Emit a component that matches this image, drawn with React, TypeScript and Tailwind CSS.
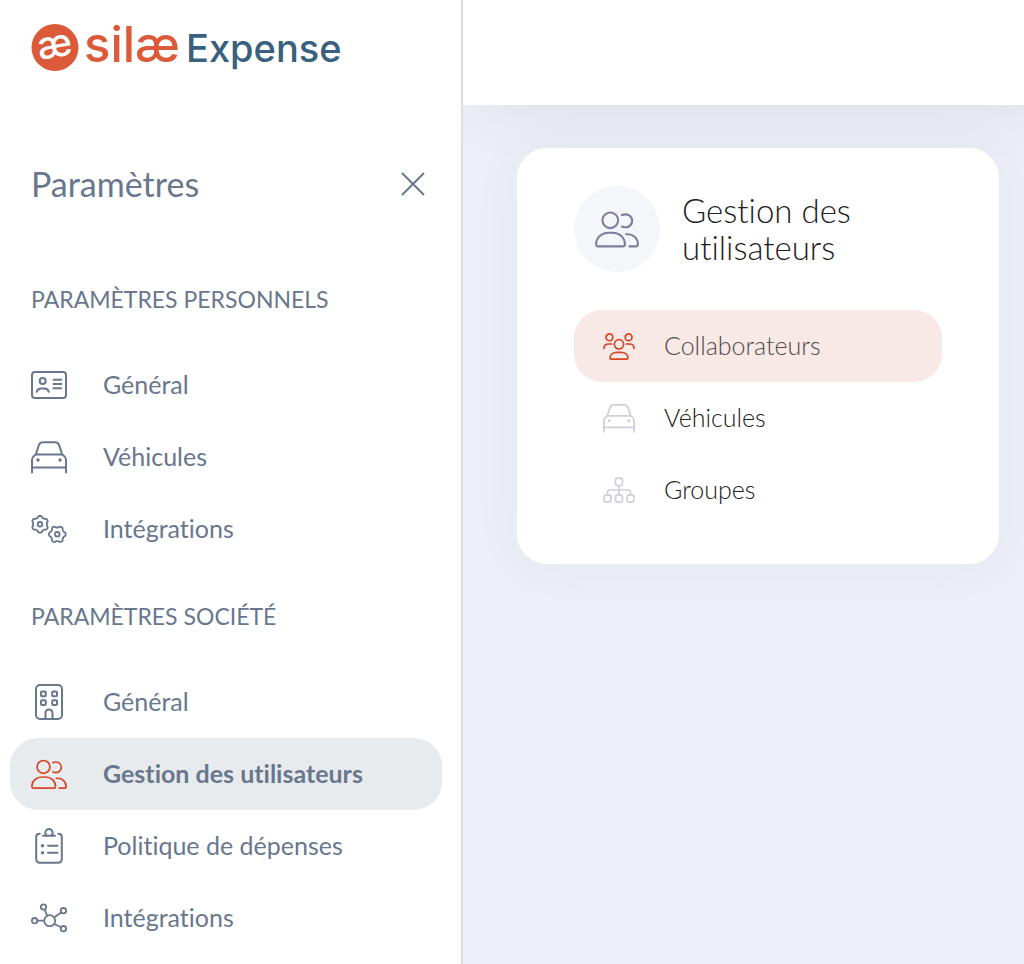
import type { ReactNode } from "react"

type IconProps = { className?: string }

function Svg({ size = 36, className = "", children }: { size?: number; className?: string; children: ReactNode }) {
  return (
    <svg
      viewBox={`0 0 ${size} ${size}`}
      fill="none"
      stroke="currentColor"
      strokeWidth="2"
      strokeLinecap="round"
      strokeLinejoin="round"
      className={`shrink-0 ${className}`}
      aria-hidden="true"
    >
      {children}
    </svg>
  )
}

function IdCardIcon({ className }: IconProps) {
  return (
    <Svg className={className}>
      <rect x="1" y="5" width="34" height="26" rx="3" />
      <circle cx="11.7" cy="14" r="3" />
      <path d="M5.7 24.8c.6-2.2 2.2-3.4 4.2-3.4h3.6c2 0 3.7 1.2 4.3 3.4" />
      <path d="M22.5 12.7h7.8M22.5 17h7.8M22.5 21.2h7.8" />
    </Svg>
  )
}

function CarIcon({ className }: IconProps) {
  return (
    <Svg className={className}>
      <path d="M1 33.5V21c0-1.800.7-3 2.200-4.200L4.800 15.500 7.800 6.300C8.500 4.300 9.800 3.300 12 3.300h12c2.200 0 3.500 1 4.200 3l3 9.200 1.600 1.300C34.300 18 35 19.200 35 21v12.500M4.800 15.500h26.400M1 28.500h34" />
      <circle cx="7" cy="21" r="1.7" fill="currentColor" stroke="none" />
      <circle cx="29" cy="21" r="1.7" fill="currentColor" stroke="none" />
    </Svg>
  )
}

// Six rounded teeth; phase turns the gear so that the two mesh
function gearPath(cx: number, cy: number, phase: number) {
  const points: string[] = []
  for (let i = 0; i < 72; i++) {
    const a = (i / 72) * Math.PI * 2
    const r = 7.6 + Math.tanh(2 * Math.cos(6 * (a - phase))) * 0.8
    points.push(`${(cx + r * Math.cos(a)).toFixed(2)} ${(cy + r * Math.sin(a)).toFixed(2)}`)
  }
  return `M${points.join("L")}Z`
}

function GearsIcon({ className }: IconProps) {
  return (
    <Svg className={className}>
      <g strokeWidth="1.8">
        <path d={gearPath(9, 13.3, Math.PI / 6)} />
        <circle cx="9" cy="13.3" r="2.3" />
        <path d={gearPath(26.3, 23.3, 0)} />
        <circle cx="26.3" cy="23.3" r="2.3" />
      </g>
    </Svg>
  )
}

function BuildingIcon({ className }: IconProps) {
  return (
    <Svg className={className}>
      <rect x="5" y="1" width="26" height="34" rx="4" />
      <rect x="10" y="7.5" width="4.8" height="4.8" rx="1" />
      <rect x="21.2" y="7.5" width="4.8" height="4.8" rx="1" />
      <rect x="10" y="16.3" width="4.8" height="4.8" rx="1" />
      <rect x="21.2" y="16.3" width="4.8" height="4.8" rx="1" />
      <path d="M14.5 35v-6a3.5 3.5 0 0 1 7 0v6" />
    </Svg>
  )
}

function UsersIcon({ className }: IconProps) {
  return (
    <Svg className={className}>
      <g strokeWidth="1.7">
        <circle cx="12.5" cy="10.9" r="6.4" />
        <path d="M11 21h3.500c5.500 0 10 4 10 9.500 0 1-.6 1.700-1.700 1.700H2.600C1.500 32.200.9 31.500.9 30.500.9 25 5.500 21 11 21Z" />
        <path d="M22 6.600c4.700-1.800 8.400 1 8.400 4.700s-3.700 6.600-8.400 4.700" />
        <path d="M25.500 22.300c5.600-.6 9.600 3.200 9.600 8.200 0 1-.6 1.700-1.600 1.700h-5.300" />
      </g>
    </Svg>
  )
}

function ClipboardIcon({ className }: IconProps) {
  return (
    <Svg className={className}>
      <path d="M8.700 5.700C6.500 5.700 5.200 7 5.200 9v22c0 2.300 1.500 3.800 3.800 3.800h18c2.300 0 3.800-1.500 3.800-3.800V9c0-2-1.300-3.300-3.500-3.300" />
      <path d="M12 7.800h12" />
      <path d="M15.300 7.300a3.700 3.700 0 1 1 5.400 0" />
      <path d="M17 17.700h9.500M17 24.700h9.500" />
      <circle cx="11.5" cy="17.7" r="1.7" fill="currentColor" stroke="none" />
      <circle cx="11.5" cy="24.7" r="1.7" fill="currentColor" stroke="none" />
    </Svg>
  )
}

function NetworkIcon({ className }: IconProps) {
  return (
    <Svg className={className}>
      <g strokeWidth="1.8">
        <circle cx="18.7" cy="20.7" r="5.5" />
        <circle cx="3.6" cy="20.7" r="2.7" />
        <circle cx="12.5" cy="7" r="2.7" />
        <circle cx="32.4" cy="10.7" r="2.7" />
        <circle cx="32.4" cy="28.7" r="2.7" />
        <path d="M6.500 20.700h6.500M13.700 9.700l2.400 6M23.300 17.200l6.800-4.800M23.300 24l6.700 3.300" />
      </g>
    </Svg>
  )
}

function TeamIcon({ className }: IconProps) {
  return (
    <Svg size={32} className={className}>
      <g strokeWidth="1.7">
        <circle cx="6.4" cy="7.3" r="3.4" />
        <circle cx="25.6" cy="7.3" r="3.4" />
        <circle cx="16" cy="14.3" r="4.6" />
        <path d="M1 18.3c0-2.500 1.700-4.300 4.200-4.300h3.600M31 18.300c0-2.500-1.700-4.300-4.200-4.300h-3.600" />
        <path d="M14 22.300h4c4 0 7 2.200 7 5.500 0 .8-.5 1.400-1.400 1.400H8.400C7.500 29.200 7 28.600 7 27.800c0-3.300 3-5.500 7-5.500Z" />
      </g>
    </Svg>
  )
}

function GroupsIcon({ className }: IconProps) {
  return (
    <Svg size={32} className={className}>
      <g strokeWidth="1.7">
        <rect x="12.500" y="4.200" width="7" height="7.400" rx="2.400" />
        <rect x="1" y="20.800" width="7" height="7.400" rx="2.400" />
        <rect x="12.500" y="20.800" width="7" height="7.400" rx="2.400" />
        <rect x="24" y="20.800" width="7" height="7.400" rx="2.400" />
        <path d="M16 11.600v9.200M4.500 20.800V18c0-1.200.8-2 2-2h19c1.200 0 2 .8 2 2v2.800" />
      </g>
    </Svg>
  )
}

function Logo() {
  return (
    <svg viewBox="0 -4 320 64" className="h-16 w-80" role="img" aria-label="silæ Expense">
      <circle cx="24" cy="27.5" r="23.5" fill="#dc5a3a" />
      <text
        x="24"
        y="37"
        textAnchor="middle"
        fill="#fff"
        fontFamily="Inter, sans-serif"
        fontSize="38"
        fontWeight="500"
        transform="rotate(-10 24 27.5)"
      >
        æ
      </text>
      <text x="53" y="42" fill="#dc5a3a" fontFamily="Inter, sans-serif" fontSize="49" fontWeight="500">
        silæ
      </text>
      <text x="155" y="42" fill="#39607c" fontFamily="Inter, sans-serif" fontSize="38" fontWeight="500">
        Expense
      </text>
    </svg>
  )
}

const sections = [
  {
    title: "PARAMÈTRES PERSONNELS",
    items: [
      { label: "Général", Icon: IdCardIcon },
      { label: "Véhicules", Icon: CarIcon },
      { label: "Intégrations", Icon: GearsIcon },
    ],
  },
  {
    title: "PARAMÈTRES SOCIÉTÉ",
    items: [
      { label: "Général", Icon: BuildingIcon },
      { label: "Gestion des utilisateurs", Icon: UsersIcon, active: true },
      { label: "Politique de dépenses", Icon: ClipboardIcon },
      { label: "Intégrations", Icon: NetworkIcon },
    ],
  },
]

const cardLinks = [
  { label: "Collaborateurs", Icon: TeamIcon, active: true },
  { label: "Véhicules", Icon: CarIcon },
  { label: "Groupes", Icon: GroupsIcon },
]

function Sidebar() {
  return (
    <aside className="w-[463px] shrink-0 border-r-2 border-[#dedede] bg-white pb-2.5 text-[#68778d]">
      <a href="#accueil" className="block pt-4 pl-[31px]">
        <Logo />
      </a>

      <div className="mt-[76px] flex items-center justify-between pr-9 pl-[31px]">
        <h1 className="text-[34px] leading-14">Paramètres</h1>
        <button type="button" aria-label="Fermer" className="cursor-pointer">
          <svg viewBox="0 0 24 24" className="size-6" fill="none" stroke="currentColor" strokeWidth="2">
            <path d="M1 1l22 22M23 1L1 23" />
          </svg>
        </button>
      </div>

      <nav className="mt-[67px] flex flex-col gap-[31px]">
        {sections.map((section) => (
          <section key={section.title}>
            <h2 className="pl-[31px] text-[23px] leading-10">{section.title}</h2>
            <ul className="mt-[30px] pr-[19px] pl-2.5">
              {section.items.map(({ label, Icon, active }) => (
                <li key={label}>
                  <a
                    href="#parametres"
                    className={`flex h-18 items-center gap-9 rounded-[28px] pl-[21px] text-[25px] ${
                      active ? "bg-[#e8ebee] font-bold" : ""
                    }`}
                  >
                    <Icon className={active ? "size-9 text-[#d64527]" : "size-9"} />
                    {label}
                  </a>
                </li>
              ))}
            </ul>
          </section>
        ))}
      </nav>
    </aside>
  )
}

export default function App() {
  return (
    <div className="flex min-h-screen font-['Lato',sans-serif] [font-variant-ligatures:none]">
      <Sidebar />

      <div className="flex min-w-0 flex-1 flex-col overflow-hidden bg-[#eceff8]">
        <header className="h-[105px] bg-white shadow-[20px_0_60px_rgba(80,50,90,0.10)]" />

        <main className="pt-[43px] pr-[25px] pl-[54px]">
          <section className="rounded-[30px] bg-white px-[57px] py-[38px] shadow-[0_0_50px_rgba(90,60,100,0.05)]">
            <div className="flex items-center gap-[22px]">
              <div className="flex size-[86px] shrink-0 items-center justify-center rounded-full bg-[#f4f6fa] text-[#7c7f9b]">
                <UsersIcon className="size-11" />
              </div>
              <h2 className="text-[33px] leading-[37px] font-light text-[#212121]">Gestion des utilisateurs</h2>
            </div>

            <ul className="mt-[38px]">
              {cardLinks.map(({ label, Icon, active }) => (
                <li key={label}>
                  <a
                    href="#utilisateurs"
                    className={`flex h-18 items-center gap-[29px] rounded-[28px] pl-[29px] text-[25px] font-light ${
                      active ? "bg-[#f8e8e6] text-[#4c4c4c]" : "text-[#212121]"
                    }`}
                  >
                    <Icon className={active ? "size-8 text-[#d64527]" : "size-8 text-[#cfcfde]"} />
                    {label}
                  </a>
                </li>
              ))}
            </ul>
          </section>
        </main>
      </div>
    </div>
  )
}
